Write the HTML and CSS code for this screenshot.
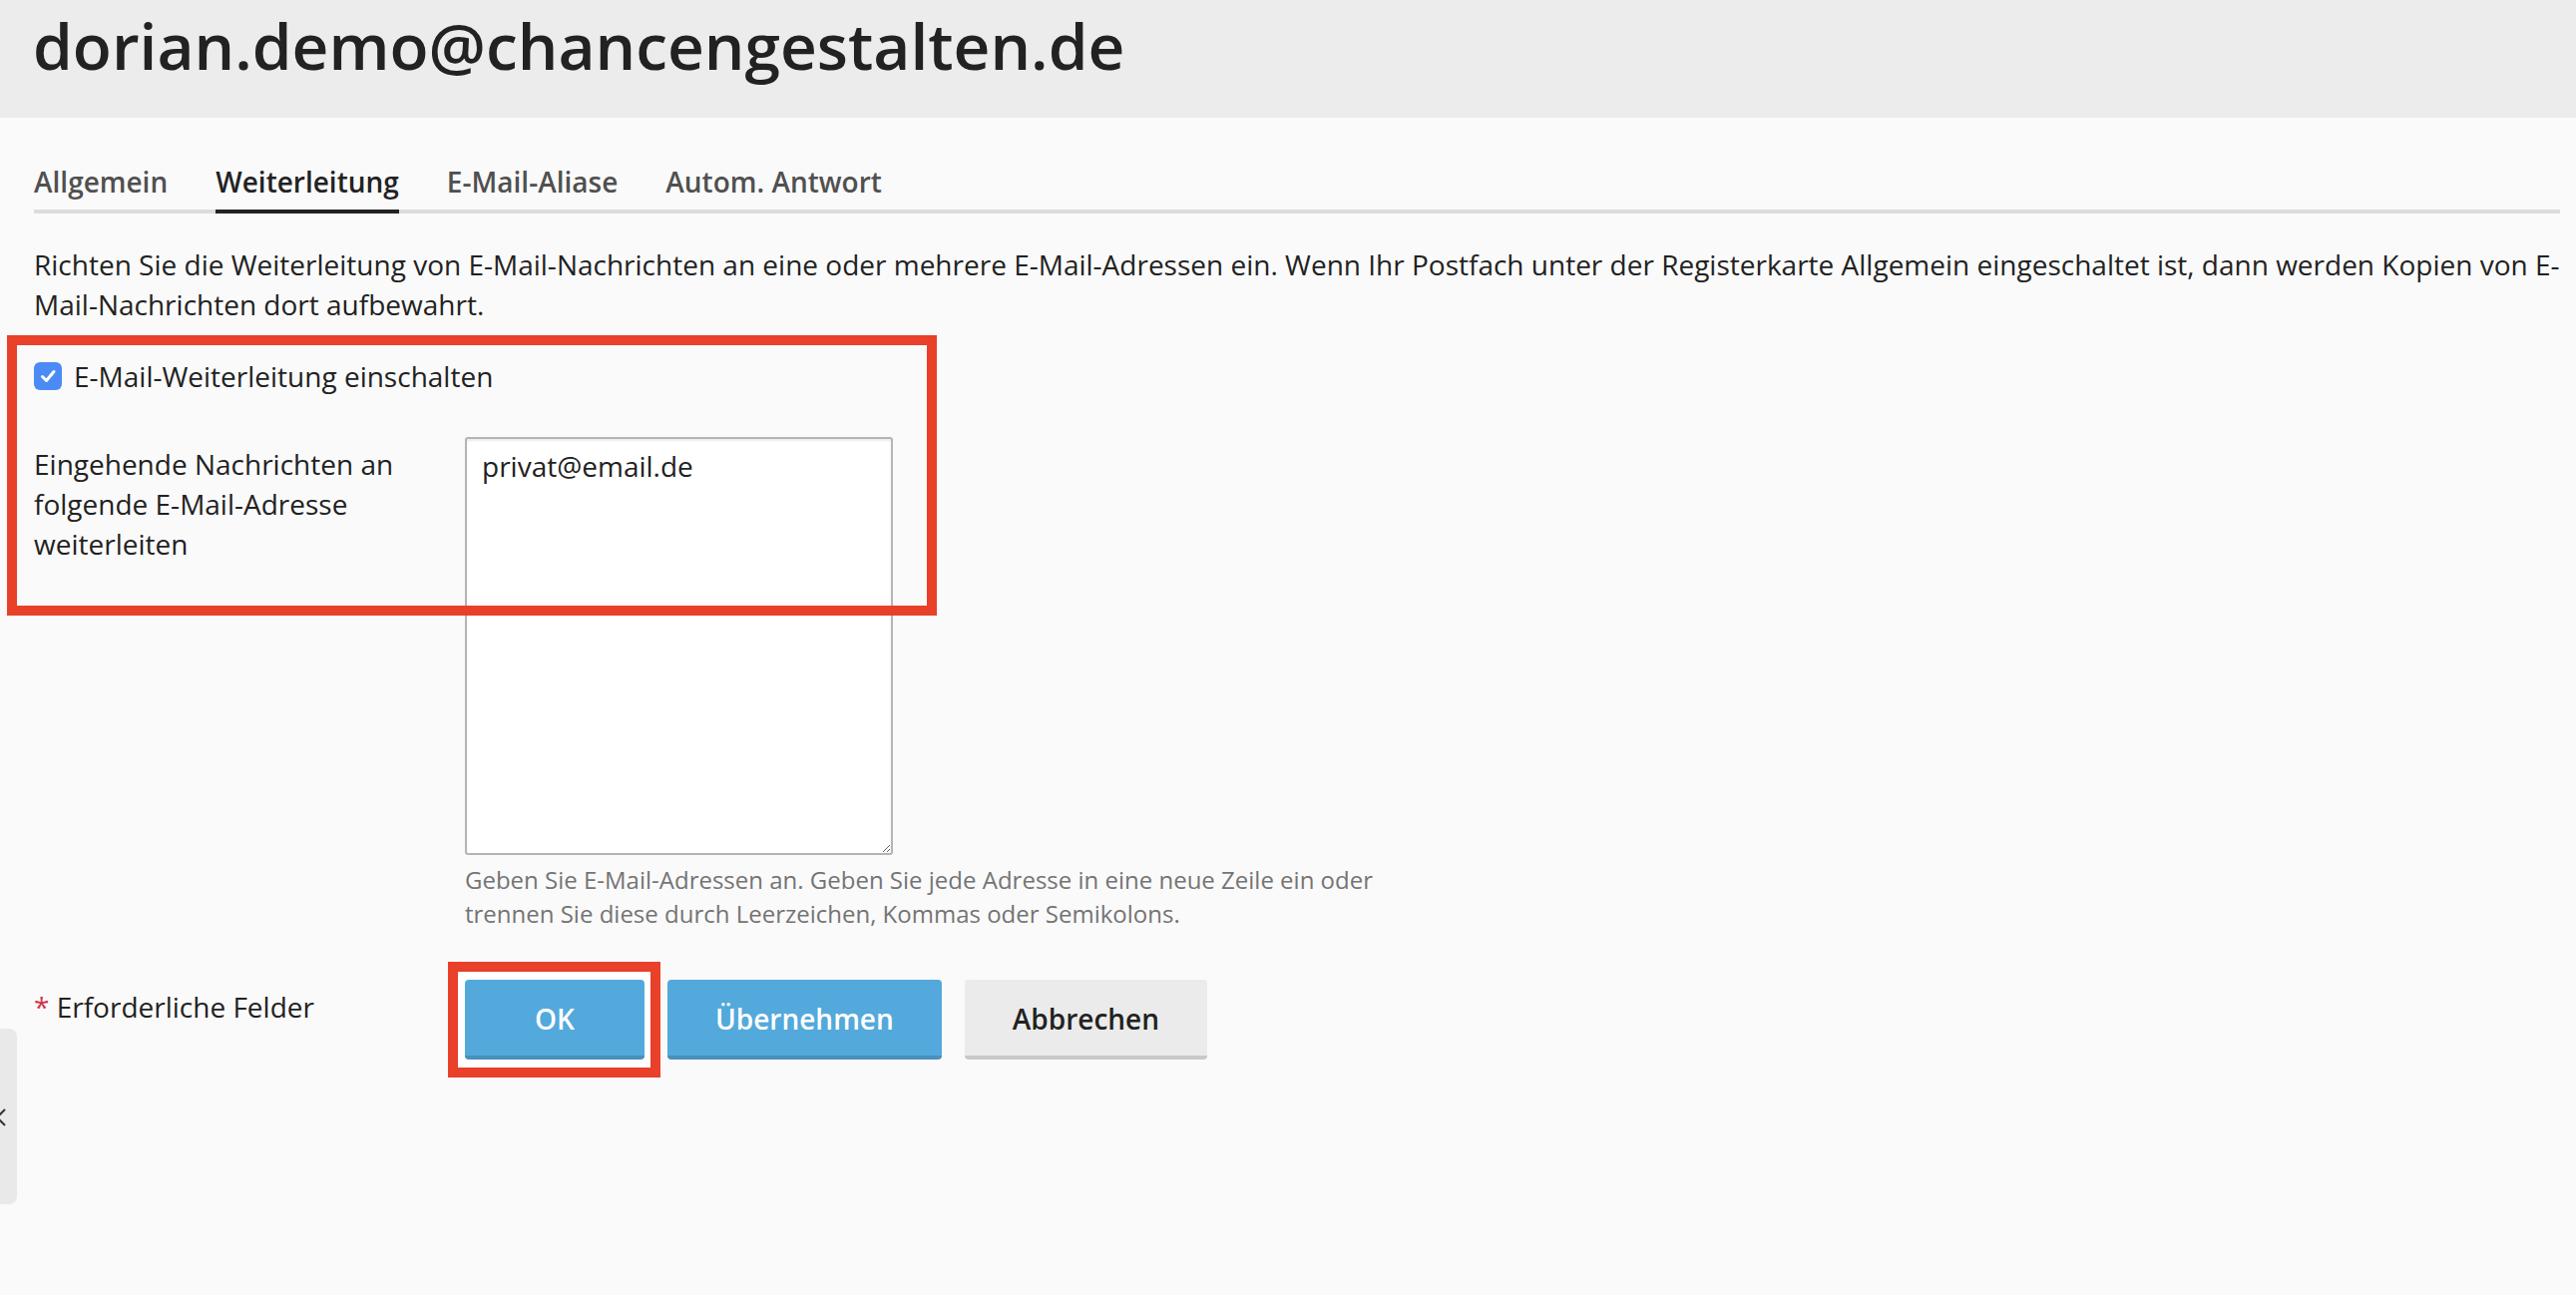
FILE: index.html
```html
<!DOCTYPE html>
<html lang="de">
<head>
  <meta charset="UTF-8">
  <meta name="viewport" content="width=device-width, initial-scale=1.0">
  <title>dorian.demo@chancengestalten.de</title>
  <link rel="stylesheet" href="styles.css">
</head>
<body>
  <header class="page-header">
    <h1 class="page-title">dorian.demo@chancengestalten.de</h1>
  </header>

  <main class="page-content">
    <ul class="tabs">
      <li>Allgemein</li>
      <li class="active">Weiterleitung</li>
      <li>E-Mail-Aliase</li>
      <li>Autom. Antwort</li>
    </ul>

    <p class="intro">Richten Sie die Weiterleitung von E-Mail-Nachrichten an eine oder mehrere E-Mail-Adressen ein. Wenn Ihr Postfach unter der Registerkarte Allgemein eingeschaltet ist, dann werden Kopien von E-Mail-Nachrichten dort aufbewahrt.</p>

    <form class="form">
      <label class="checkbox-row">
        <span class="checkbox">
          <svg width="28" height="28" viewBox="0 0 28 28"><polyline points="8.5,14.5 12.5,18.5 20,9.5" fill="none" stroke="#fff" stroke-width="3" stroke-linecap="round" stroke-linejoin="round"/></svg>
        </span>
        E-Mail-Weiterleitung einschalten
      </label>

      <div class="form-row">
        <div class="field-label">Eingehende Nachrichten an folgende E-Mail-Adresse weiterleiten</div>
        <div class="field-value">
          <textarea class="input">privat@email.de</textarea>
          <div class="hint">Geben Sie E-Mail-Adressen an. Geben Sie jede Adresse in eine neue Zeile ein oder trennen Sie diese durch Leerzeichen, Kommas oder Semikolons.</div>
        </div>
      </div>

      <div class="form-row form-actions">
        <div class="field-label"><span class="required">*</span> Erforderliche Felder</div>
        <div class="buttons">
          <span class="mark-button">
            <button type="button" class="btn btn-primary btn-ok">OK</button>
          </span>
          <button type="button" class="btn btn-primary">Übernehmen</button>
          <button type="button" class="btn">Abbrechen</button>
        </div>
      </div>
    </form>
  </main>

  <!-- Markierung um Checkbox und Adressfeld -->
  <div class="mark-fields"></div>

  <div class="side-tab">
    <svg class="side-tab-icon" width="10" height="18" viewBox="0 0 10 18"><polyline points="9,1 1,9 9,17" fill="none" stroke="#333" stroke-width="2"/></svg>
  </div>
</body>
</html>
```

FILE: styles.css
```css
html {
  background: #fafafa;
}
body {
  margin: 0;
  position: relative;
  min-height: 1298px;
  font-family: "Open Sans", "Liberation Sans", sans-serif;
  font-size: 28px;
  line-height: 40px;
  color: #222;
}

.page-header {
  background: #ececec;
  height: 118px;
  box-sizing: border-box;
  padding: 6px 18px 0 33px;
}
.page-title {
  margin: 0;
  font-size: 64px;
  line-height: 80px;
  font-weight: 600;
}

.page-content {
  padding: 0 16px 0 34px;
}

.tabs {
  list-style: none;
  margin: 44px 0 0;
  padding: 0;
  display: flex;
  gap: 48px;
  border-bottom: 4px solid #dcdcdc;
}
.tabs li {
  font-weight: 600;
  color: #505050;
  padding-bottom: 8px;
  border-bottom: 4px solid transparent;
  margin-bottom: -4px;
}
.tabs li.active {
  color: #222;
  border-color: #222;
}

.intro {
  margin: 31px 0 0;
}

.form {
  margin-top: 32px;
}
.checkbox-row {
  display: flex;
  align-items: center;
  gap: 12px;
  height: 40px;
}
.checkbox {
  width: 28px;
  height: 28px;
  border-radius: 6px;
  background: #4c8bf5;
  display: flex;
}

.form-row {
  display: flex;
  margin-top: 41px;
}
.field-label {
  flex: none;
  width: 432px;
  box-sizing: border-box;
  padding: 7px 30px 0 0;
}
.input {
  display: block;
  width: 429px;
  height: 419px;
  box-sizing: border-box;
  margin: 0;
  padding: 7px 15px;
  border: 2px solid #b4b4b4;
  border-radius: 3px;
  box-shadow: inset 0 2px 2px rgba(0, 0, 0, 0.08);
  background: #fff;
  font: inherit;
  color: #222;
}
.hint {
  margin-top: 8px;
  max-width: 950px;
  font-size: 24px;
  line-height: 34px;
  color: #747474;
}

.form-actions {
  margin-top: 49px;
}
.form-actions .field-label {
  padding-top: 7px;
}
.required {
  color: #d0354f;
}
.buttons {
  display: flex;
  align-items: flex-start;
  gap: 23px;
}
.btn {
  height: 80px;
  min-width: 180px;
  box-sizing: border-box;
  padding: 0 48px;
  border: 0;
  border-bottom: 4px solid #c9c9c9;
  border-radius: 4px;
  background: #ebebeb;
  color: #222;
  font-family: inherit;
  font-size: 28px;
  font-weight: 600;
  line-height: 78px;
}
.btn-primary {
  background: #53a9db;
  border-bottom-color: #4990bd;
  color: #fff;
}

.mark-button {
  display: flex;
  margin: -18px -16px -18px -17px;
  padding: 8px 6px 8px 7px;
  border: 10px solid #e9402a;
  background: #fff;
}
.mark-fields {
  position: absolute;
  left: 7px;
  top: 336px;
  width: 932px;
  height: 281px;
  box-sizing: border-box;
  border: 10px solid #e9402a;
  pointer-events: none;
}

.side-tab {
  position: absolute;
  left: 0;
  top: 1031px;
  width: 17px;
  height: 176px;
  background: #e9e9e9;
  border-radius: 0 8px 8px 0;
}
.side-tab-icon {
  position: absolute;
  left: -4px;
  top: 80px;
}
```
